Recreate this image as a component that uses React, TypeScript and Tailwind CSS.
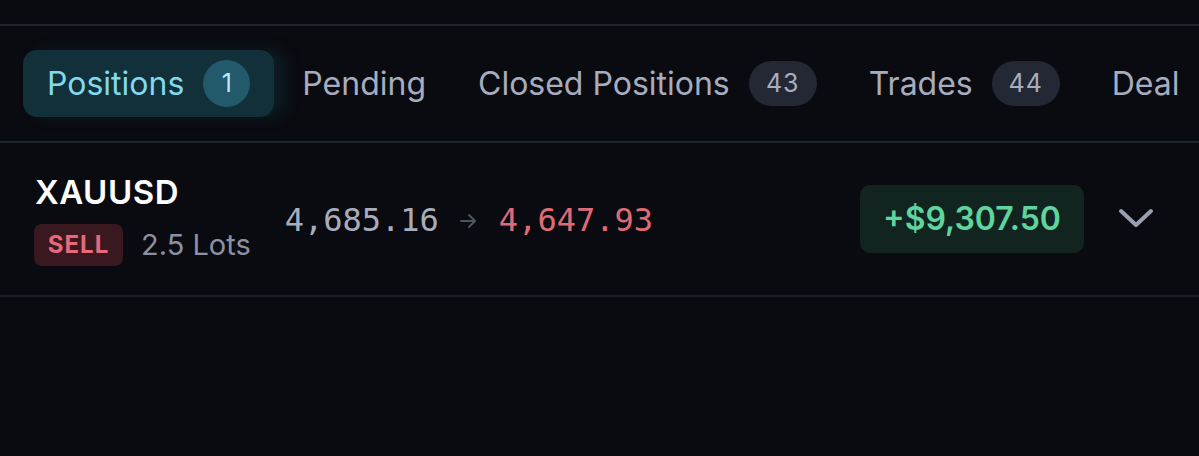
const tabs = [
  { label: "Pending" },
  { label: "Closed Positions", count: "43" },
  { label: "Trades", count: "44" },
  { label: "Deal" },
];

function Chevron() {
  return (
    <svg width="40" height="40" viewBox="0 0 40 40" fill="none">
      <path
        d="M5 12 L20 26 L35 12"
        stroke="#9a9fb0"
        strokeWidth="4"
        strokeLinecap="round"
        strokeLinejoin="round"
      />
    </svg>
  );
}

function Arrow() {
  return (
    <svg width="18" height="18" viewBox="0 0 18 18" fill="none" className="mx-[20px] mt-[2px]">
      <path
        d="M2 9 H16 M10 3 L16 9 L10 15"
        stroke="#4d5563"
        strokeWidth="2"
        strokeLinecap="round"
        strokeLinejoin="round"
      />
    </svg>
  );
}

export default function App() {
  return (
    <div
      className="w-[1199px] h-[456px] bg-[#0a0b10] pt-6 overflow-hidden"
      style={{ fontFamily: "Inter, 'Noto Sans', sans-serif" }}
    >
      {/* tab bar */}
      <div className="h-[119px] border-y-2 border-[#1c252b] flex items-center pl-[23px] whitespace-nowrap">
        <div className="flex items-center h-[67px] px-6 gap-[19px] rounded-[14px] bg-[#11303a] shadow-[12px_0_14px_rgba(17,48,58,0.45)]">
          <span className="text-[32px] text-[#82d9ec]">Positions</span>
          <span className="w-[47px] h-[47px] rounded-full bg-[#22596b] text-[#bfe9f2] text-[25px] flex items-center justify-center">
            1
          </span>
        </div>
        {tabs.map((t) => (
          <div key={t.label} className="flex items-center h-[67px] px-6 ml-[4px] gap-[19px]">
            <span className="text-[32px] text-[#a7acbf]">{t.label}</span>
            {t.count && (
              <span className="w-[68px] h-[45px] rounded-full bg-[#242834] text-[#a9aebf] text-[25px] flex items-center justify-center tracking-[1px]">
                {t.count}
              </span>
            )}
          </div>
        ))}
      </div>

      {/* position row */}
      <div className="h-[154px] border-b-2 border-[#1a1c27] flex items-center justify-between pl-[34px] pr-[43px]">
        <div className="flex items-center">
          <div className="flex flex-col mt-[4px]">
            <span className="text-[33px] font-semibold text-white leading-none pl-px tracking-[0.5px]">XAUUSD</span>
            <div className="flex items-center mt-[14px] gap-[18px]">
              <span className="h-[42px] w-[89px] rounded-[8px] bg-[#3a1820] text-[#e66a7b] text-[24px] font-bold flex items-center justify-center tracking-[1px]">
                SELL
              </span>
              <span className="text-[29px] text-[#8b91a3]">2.5 Lots</span>
            </div>
          </div>
          <div
            className="flex items-center ml-[34px] mt-[2px] text-[32px]"
            style={{ fontFamily: "'DejaVu Sans Mono', monospace" }}
          >
            <span className="text-[#a8adbb]">4,685.16</span>
            <Arrow />
            <span className="text-[#e06b78] ml-[2px]">4,647.93</span>
          </div>
        </div>
        <div className="flex items-center gap-[32px]">
          <span className="h-[68px] w-[224px] rounded-[10px] bg-[#11241f] text-[#5fd49e] text-[32px] font-semibold flex items-center justify-center">
            +$9,307.50
          </span>
          <Chevron />
        </div>
      </div>
    </div>
  );
}
